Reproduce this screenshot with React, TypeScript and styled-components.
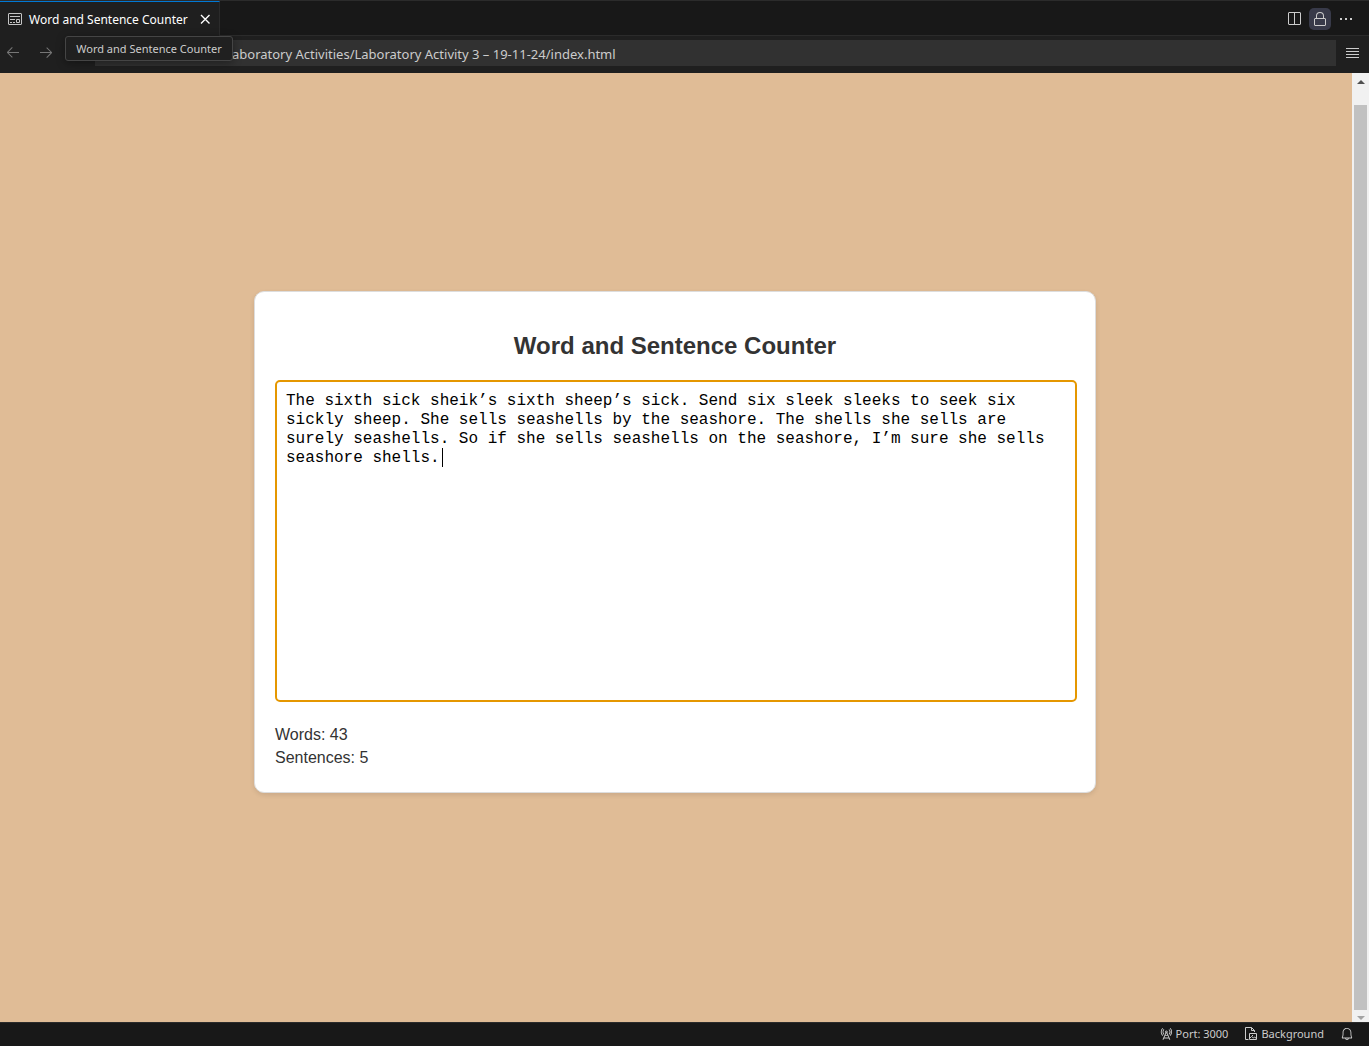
import React, { useState } from "react";
import styled, { createGlobalStyle } from "styled-components";
import {
  VscArrowLeft,
  VscArrowRight,
  VscBell,
  VscLock,
  VscRadioTower,
  VscSplitHorizontal,
} from "react-icons/vsc";

const GlobalStyle = createGlobalStyle`
  *, *::before, *::after { box-sizing: border-box; }
  body { margin: 0; background: #181818; }
  button, input, textarea { font: inherit; color: inherit; }
`;

const Window = styled.div`
  display: flex;
  flex-direction: column;
  height: 100vh;
  font-family: "Noto Sans", "Open Sans", sans-serif;
  font-size: 12px;
  color: #cccccc;
`;

const TabBar = styled.header`
  display: flex;
  justify-content: space-between;
  height: 36px;
  flex: none;
  background: #181818;
  border-top: 1px solid #2b2b2b;
  box-shadow: inset 0 -1px #2b2b2b;
`;

const Tab = styled.div`
  display: flex;
  align-items: center;
  width: 220px;
  padding: 0 6px 0 7px;
  gap: 6px;
  background: #1f1f1f;
  border-top: 1px solid #0078d4;
  border-right: 1px solid #2b2b2b;
  color: #ffffff;
`;

const TabTitle = styled.span`
  flex: 1;
  white-space: nowrap;
`;

const IconButton = styled.button<{ $size?: number; $active?: boolean; $dim?: boolean }>`
  display: flex;
  align-items: center;
  justify-content: center;
  flex: none;
  width: ${(p) => p.$size ?? 22}px;
  height: ${(p) => p.$size ?? 22}px;
  padding: 0;
  border: 0;
  border-radius: 5px;
  background: ${(p) => (p.$active ? "#383a49" : "transparent")};
  color: ${(p) => (p.$dim ? "#767676" : "inherit")};
`;

const TabActions = styled.div`
  display: flex;
  align-items: center;
  gap: 4px;
  padding-right: 12px;
`;

const Toolbar = styled.nav`
  position: relative;
  display: flex;
  align-items: center;
  height: 37px;
  flex: none;
  padding: 0 6px 3px 2px;
  background: #1f1f1f;
`;

const HistoryButtons = styled.div`
  display: flex;
  gap: 11px;
  width: 93px;
  padding-bottom: 2px;
`;

const Address = styled.input`
  flex: 1;
  min-width: 0;
  height: 26px;
  margin-right: 5px;
  padding: 2px 0 0 137px;
  border: 0;
  outline: 0;
  background: #313131;
  font-size: 13px;
`;

const Tooltip = styled.div`
  position: absolute;
  left: 65px;
  top: 0;
  min-width: 168px;
  height: 25px;
  border: 1px solid #454545;
  border-radius: 3px;
  background: #202020;
  box-shadow: 0 2px 8px rgba(0, 0, 0, 0.36);
  font-size: 11px;
  line-height: 23px;
  text-align: center;
  white-space: nowrap;
`;

const Preview = styled.div`
  display: flex;
  flex: 1;
  min-height: 0;
`;

const Page = styled.main`
  display: flex;
  flex: 1;
  align-items: center;
  justify-content: center;
  padding: 0 20px 11px 18px;
  background: #e0bc96;
  font-family: "Liberation Sans", Arial, sans-serif;
  font-size: 16px;
  line-height: 23px;
  color: #333333;
`;

const Card = styled.section`
  width: 100%;
  max-width: 842px;
  padding: 40px 18px 23px 20px;
  border: 1px solid #dddddd;
  border-radius: 10px;
  background: #ffffff;
  box-shadow: 0 2px 5px rgba(0, 0, 0, 0.1);
`;

const Title = styled.h1`
  margin: 0 2px 20px 0;
  font-size: 24px;
  line-height: 28px;
  text-align: center;
`;

const Editor = styled.div`
  position: relative;
  display: flex;
  margin-bottom: 21px;
  font-family: "Liberation Mono", "Courier New", monospace;
  line-height: 19px;
`;

const TextArea = styled.textarea`
  width: 100%;
  height: 322px;
  padding: 10px 9px;
  border: 2px solid #e59700;
  border-radius: 5px;
  outline: 0;
  resize: none;
  background: #ffffff;
  color: #000000;
  caret-color: transparent;
`;

const Caret = styled.span`
  position: absolute;
  top: 68px;
  left: calc(13px + 16ch);
  width: 1px;
  height: 19px;
  background: #000000;
`;

const Stat = styled.p`
  margin: 0;
`;

const ScrollTrack = styled.div`
  display: flex;
  flex-direction: column;
  align-items: center;
  width: 17px;
  background: #f1f1f1;
`;

const ScrollArrow = styled.span<{ $down?: boolean }>`
  display: flex;
  align-items: center;
  justify-content: center;
  height: ${(p) => (p.$down ? 12 : 17)}px;
  padding-top: ${(p) => (p.$down ? 4 : 0)}px;
  margin-bottom: ${(p) => (p.$down ? 0 : 15)}px;

  &::before {
    content: "";
    border: 4px solid transparent;
    border-top: ${(p) => (p.$down ? "4px solid #a3a3a3" : "0")};
    border-bottom: ${(p) => (p.$down ? "0" : "4px solid #505050")};
  }
`;

const ScrollThumb = styled.div`
  flex: 1;
  width: 13px;
  background: #c1c1c1;
`;

const StatusBar = styled.footer`
  display: flex;
  align-items: center;
  justify-content: flex-end;
  gap: 16px;
  height: 24px;
  flex: none;
  padding: 0 15px 2px 0;
  background: #181818;
  border-top: 1px solid #2b2b2b;
  font-size: 11px;
`;

const StatusItem = styled.button`
  display: flex;
  align-items: center;
  gap: 3px;
  padding: 0;
  border: 0;
  background: transparent;
`;

const PreviewIcon = () => (
  <svg width="16" height="16" viewBox="0 0 16 16" fill="none" stroke="#c5c5c5">
    <rect x="1.5" y="2.5" width="13" height="11" rx="0.5" />
    <path d="M3 5.5h10M3 8.5h5M3 11.5h2M6 11.5h2M9.5 8.5h3v3h-3z" />
  </svg>
);

const CloseIcon = () => (
  <svg width="16" height="16" viewBox="0 0 16 16" fill="none" stroke="#ffffff" strokeWidth="1.4">
    <path d="M4 4l8.5 8.5M12.5 4L4 12.5" />
  </svg>
);

const EllipsisIcon = () => (
  <svg width="16" height="16" viewBox="0 0 16 16" fill="currentColor">
    <path d="M2 7h2v2H2zM7 7h2v2H7zM12 7h2v2h-2z" />
  </svg>
);

const MenuIcon = () => (
  <svg width="16" height="16" viewBox="0 0 16 16" fill="none" stroke="currentColor">
    <path d="M2 3.5h13M2 6.5h13M2 9.5h13M2 12.5h13" />
  </svg>
);

const BackgroundIcon = () => (
  <svg width="14" height="14" viewBox="0 0 14 14" fill="none" stroke="currentColor">
    <path d="M4.5 12.5h-3v-12h6l3 3V5M7.5 0.5v3h3" />
    <path d="M5.5 6.5h7v6h-7zM5.5 11.5l2-2 2 1.5 1-1 2 1.5M8 8.5h1" />
  </svg>
);

const INITIAL_TEXT =
  "The sixth sick sheik’s sixth sheep’s sick. Send six sleek sleeks to seek six sickly sheep. She sells seashells by the seashore. The shells she sells are surely seashells. So if she sells seashells on the seashore, I’m sure she sells seashore shells.";

export default function App() {
  const [text, setText] = useState(INITIAL_TEXT);
  const words = text.trim().split(/\s+/).filter(Boolean).length;
  const sentences = text.split(/[.!?]+/).filter((s) => s.trim()).length;

  return (
    <Window>
      <GlobalStyle />
      <TabBar>
        <Tab>
          <PreviewIcon />
          <TabTitle>Word and Sentence Counter</TabTitle>
          <IconButton $size={16} aria-label="Close tab">
            <CloseIcon />
          </IconButton>
        </Tab>
        <TabActions>
          <IconButton aria-label="Split editor">
            <VscSplitHorizontal size={16} />
          </IconButton>
          <IconButton $active aria-label="Unlock group">
            <VscLock size={16} />
          </IconButton>
          <IconButton aria-label="More actions">
            <EllipsisIcon />
          </IconButton>
        </TabActions>
      </TabBar>
      <Toolbar>
        <HistoryButtons>
          <IconButton $dim aria-label="Back">
            <VscArrowLeft size={16} />
          </IconButton>
          <IconButton $dim aria-label="Forward">
            <VscArrowRight size={16} />
          </IconButton>
        </HistoryButtons>
        <Address
          aria-label="Address"
          defaultValue="aboratory Activities/Laboratory Activity 3 – 19-11-24/index.html"
        />
        <IconButton aria-label="Menu">
          <MenuIcon />
        </IconButton>
        <Tooltip role="tooltip">Word and Sentence Counter</Tooltip>
      </Toolbar>
      <Preview>
        <Page>
          <Card>
            <Title>Word and Sentence Counter</Title>
            <Editor>
              <TextArea
                aria-label="Text to count"
                spellCheck={false}
                value={text}
                onChange={(e) => setText(e.target.value)}
              />
              {text === INITIAL_TEXT && <Caret />}
            </Editor>
            <Stat>Words: {words}</Stat>
            <Stat>Sentences: {sentences}</Stat>
          </Card>
        </Page>
        <ScrollTrack>
          <ScrollArrow />
          <ScrollThumb />
          <ScrollArrow $down />
        </ScrollTrack>
      </Preview>
      <StatusBar>
        <StatusItem>
          <VscRadioTower size={14} />
          Port: 3000
        </StatusItem>
        <StatusItem>
          <BackgroundIcon />
          Background
        </StatusItem>
        <StatusItem aria-label="Notifications">
          <VscBell size={14} />
        </StatusItem>
      </StatusBar>
    </Window>
  );
}
